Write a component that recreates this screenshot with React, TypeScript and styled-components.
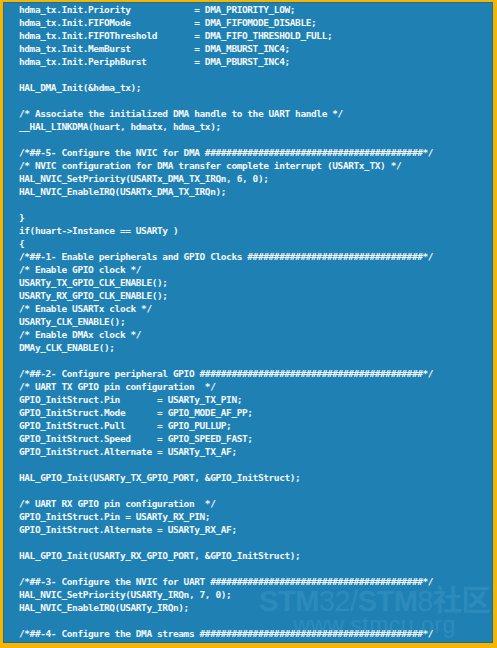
import React from "react";
import styled, { createGlobalStyle } from "styled-components";

const Global = createGlobalStyle`
  html, body { margin: 0; padding: 0; background: #ffffff; }
`;

const Frame = styled.div`
  position: relative;
  width: 497px;
  height: 648px;
  box-sizing: border-box;
  background: #f6b600;
  padding: 2px 4px 5px 3px;
  overflow: hidden;
`;

const Panel = styled.div`
  position: relative;
  width: 100%;
  height: 100%;
  box-sizing: border-box;
  background: #1f81b3;
  border: 1px solid #1b6f9c;
  padding: 0 0 0 15px;
  overflow: hidden;
`;

const Code = styled.div`
  display: flex;
  flex-direction: column;
  font-family: "DejaVu Sans Mono", "Liberation Mono", monospace;
  font-size: 9.5px;
  font-weight: 700;
  letter-spacing: -0.41px;
  color: #f2f7fb;
`;

const Line = styled.div`
  height: 13px;
  line-height: 13px;
  white-space: pre;
`;

const Watermark = styled.div`
  position: absolute;
  right: 2px;
  bottom: 6px;
  display: flex;
  flex-direction: column;
  align-items: center;
  font-family: "Liberation Sans", Arial, "Noto Sans CJK SC", sans-serif;
  color: rgba(110, 185, 230, 0.2);
  pointer-events: none;
`;

const MarkTitle = styled.div`
  font-size: 29px;
  line-height: 26px;
  letter-spacing: -0.5px;
  white-space: nowrap;
`;

const Strong = styled.span`
  font-weight: 700;
`;

const Thin = styled.span`
  font-weight: 400;
`;

const MarkUrl = styled.div`
  font-size: 23px;
  line-height: 22px;
  letter-spacing: 0.5px;
  white-space: nowrap;
`;

const pad = (s: string, n: number) => s + " ".repeat(Math.max(0, n - s.length));
const banner = (s: string) => s + "#".repeat(Math.max(0, 76 - s.length)) + "*/";

const lines: string[] = [
  pad("hdma_tx.Init.Priority", 33) + "= DMA_PRIORITY_LOW;",
  pad("hdma_tx.Init.FIFOMode", 33) + "= DMA_FIFOMODE_DISABLE;",
  pad("hdma_tx.Init.FIFOThreshold", 33) + "= DMA_FIFO_THRESHOLD_FULL;",
  pad("hdma_tx.Init.MemBurst", 33) + "= DMA_MBURST_INC4;",
  pad("hdma_tx.Init.PeriphBurst", 33) + "= DMA_PBURST_INC4;",
  "",
  "HAL_DMA_Init(&hdma_tx);",
  "",
  "/* Associate the initialized DMA handle to the UART handle */",
  "__HAL_LINKDMA(huart, hdmatx, hdma_tx);",
  "",
  banner("/*##-5- Configure the NVIC for DMA "),
  "/* NVIC configuration for DMA transfer complete interrupt (USARTx_TX) */",
  "HAL_NVIC_SetPriority(USARTx_DMA_TX_IRQn, 6, 0);",
  "HAL_NVIC_EnableIRQ(USARTx_DMA_TX_IRQn);",
  "",
  "}",
  "if(huart->Instance == USARTy )",
  "{",
  banner("/*##-1- Enable peripherals and GPIO Clocks "),
  "/* Enable GPIO clock */",
  "USARTy_TX_GPIO_CLK_ENABLE();",
  "USARTy_RX_GPIO_CLK_ENABLE();",
  "/* Enable USARTx clock */",
  "USARTy_CLK_ENABLE();",
  "/* Enable DMAx clock */",
  "DMAy_CLK_ENABLE();",
  "",
  banner("/*##-2- Configure peripheral GPIO "),
  "/* UART TX GPIO pin configuration  */",
  pad("GPIO_InitStruct.Pin", 26) + "= USARTy_TX_PIN;",
  pad("GPIO_InitStruct.Mode", 26) + "= GPIO_MODE_AF_PP;",
  pad("GPIO_InitStruct.Pull", 26) + "= GPIO_PULLUP;",
  pad("GPIO_InitStruct.Speed", 26) + "= GPIO_SPEED_FAST;",
  pad("GPIO_InitStruct.Alternate", 26) + "= USARTy_TX_AF;",
  "",
  "HAL_GPIO_Init(USARTy_TX_GPIO_PORT, &GPIO_InitStruct);",
  "",
  "/* UART RX GPIO pin configuration  */",
  "GPIO_InitStruct.Pin = USARTy_RX_PIN;",
  "GPIO_InitStruct.Alternate = USARTy_RX_AF;",
  "",
  "HAL_GPIO_Init(USARTy_RX_GPIO_PORT, &GPIO_InitStruct);",
  "",
  banner("/*##-3- Configure the NVIC for UART "),
  "HAL_NVIC_SetPriority(USARTy_IRQn, 7, 0);",
  "HAL_NVIC_EnableIRQ(USARTy_IRQn);",
  "",
  banner("/*##-4- Configure the DMA streams "),
];

export default function App() {
  return (
    <>
      <Global />
      <Frame>
        <Panel>
          <Code>
            {lines.map((l, i) => (
              <Line key={i}>{l}</Line>
            ))}
          </Code>
          <Watermark>
            <MarkTitle>
              <Strong>STM</Strong>
              <Thin>32/</Thin>
              <Strong>STM</Strong>
              <Thin>8</Thin>
              <Strong>社区</Strong>
            </MarkTitle>
            <MarkUrl>www.stmcu.org</MarkUrl>
          </Watermark>
        </Panel>
      </Frame>
    </>
  );
}
